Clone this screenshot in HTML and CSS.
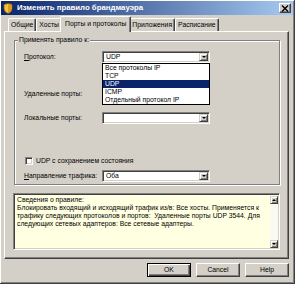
FILE: index.html
```html
<!DOCTYPE html>
<html lang="ru">
<head>
<meta charset="utf-8">
<title>Изменить правило брандмауэра</title>
<link rel="stylesheet" href="styles.css">
</head>
<body>
<div class="window">
  <div class="titlebar">
    <svg class="title-icon" width="10" height="11" viewBox="0 0 10 11">
      <path d="M1 1.5 L5 0.5 L9 1.5 L9 5.5 Q9 9 5 10.5 Q1 9 1 5.5 Z" fill="#f2c53d" stroke="#8a5a10" stroke-width="0.8"/>
      <path d="M5 1.2 L5 10 Q8.3 8.6 8.3 5.5 L8.3 2 Z" fill="#e09a1c"/>
    </svg>
    <span class="title-text">Изменить правило брандмауэра</span>
    <div class="close">
      <svg width="8" height="7" viewBox="0 0 8 7"><path d="M1 0.5 L7 6.5 M7 0.5 L1 6.5" stroke="#000" stroke-width="1.4"/></svg>
    </div>
  </div>

  <div class="tabs">
    <div class="tab">Общие</div>
    <div class="tab">Хосты</div>
    <div class="tab tab-active">Порты и протоколы</div>
    <div class="tab">Приложения</div>
    <div class="tab">Расписание</div>
  </div>

  <div class="panel">
    <div class="group">
      <div class="legend">Применять правило к:</div>

      <div class="row r-proto">
        <label class="lbl"><u>П</u>ротокол:</label>
        <div class="combo">
          <span class="combo-text">UDP</span>
          <span class="arrow-btn"><span class="tri-down"></span></span>
          <div class="dropdown">
            <div class="item">Все протоколы IP</div>
            <div class="item">TCP</div>
            <div class="item item-sel">UDP</div>
            <div class="item">ICMP</div>
            <div class="item">Отдельный протокол IP</div>
          </div>
        </div>
      </div>

      <div class="row r-remote">
        <label class="lbl">Удаленные порты:</label>
        <div class="field"></div>
      </div>

      <div class="row r-local">
        <label class="lbl">Локальные порты:</label>
        <div class="combo">
          <span class="combo-text"></span>
          <span class="arrow-btn"><span class="tri-down"></span></span>
        </div>
      </div>

      <div class="row r-check">
        <span class="checkbox"></span>
        <span class="check-label">UDP с сохранением состояния</span>
      </div>

      <div class="row r-dir">
        <label class="lbl"><u>Н</u>аправление трафика:</label>
        <div class="combo">
          <span class="combo-text">Оба</span>
          <span class="arrow-btn"><span class="tri-down"></span></span>
        </div>
      </div>
    </div>

    <div class="info">
      <div class="info-text">Сведения о правиле:<br>Блокировать входящий и исходящий трафик из/в: Все хосты. Применяется к<br>трафику следующих протоколов и портов:&nbsp; Удаленные порты UDP 3544. Для<br>следующих сетевых адаптеров: Все сетевые адаптеры.</div>
      <div class="scrollbar">
        <span class="sb-btn"><span class="tri-up"></span></span>
        <span class="sb-track"></span>
        <span class="sb-btn"><span class="tri-down"></span></span>
      </div>
    </div>
  </div>

  <div class="buttons">
    <div class="btn btn-default">OK</div>
    <div class="btn">Cancel</div>
    <div class="btn">Help</div>
  </div>
</div>
</body>
</html>
```

FILE: styles.css
```css
* { box-sizing: border-box; }

body {
  margin: 0;
  background: #d4d0c8;
  font-family: "Liberation Sans", Arial, sans-serif;
  font-size: 6.8px;
  line-height: 8px;
  color: #000;
}

.window {
  width: 295px;
  height: 284px;
  padding: 1px 3px 0 2px;
  background: #d4d0c8;
  border-right: 1px solid #404040;
  border-bottom: 1px solid #404040;
  box-shadow: inset 1px 1px #ffffff, inset -1px -1px #808080;
}

.titlebar {
  height: 14px;
  margin: 0 -2px 0 -1px;
  padding: 0 2px 0 2px;
  display: flex;
  align-items: center;
  background: linear-gradient(to right, #0a246a, #a6caf0);
  color: #fff;
  font-weight: bold;
  font-size: 7.8px;
}

.title-icon { margin-right: 4px; flex: none; }
.title-text { flex: 1; white-space: nowrap; }

.close {
  width: 12px;
  height: 10px;
  display: flex;
  align-items: center;
  justify-content: center;
  background: #d4d0c8;
  border: 1px solid;
  border-color: #fff #404040 #404040 #fff;
  box-shadow: inset -1px -1px #808080;
}

.tabs {
  height: 16px;
  display: flex;
  align-items: flex-end;
  padding-left: 6px;
}

.tab {
  height: 13px;
  padding: 0 2px;
  border: 1px solid;
  border-color: #fff #404040 transparent #fff;
  border-bottom: none;
  border-radius: 2px 2px 0 0;
  line-height: 11px;
  white-space: nowrap;
  box-shadow: inset -1px 0 #808080;
}

.tab-active {
  height: 16px;
  margin: 0 -2px -1px -2px;
  padding: 0 4px;
  position: relative;
  z-index: 2;
  background: #d4d0c8;
  line-height: 13px;
}

.panel {
  height: 228px;
  margin: 0 2px;
  padding: 8px 8px 0 9px;
  border: 1px solid;
  border-color: #fff #404040 #404040 #fff;
  box-shadow: inset -1px -1px #808080;
}

.group {
  position: relative;
  height: 145px;
  padding: 10px 0 0 9px;
  border: 1px solid #808080;
  box-shadow: 1px 1px 0 #fff, inset 1px 1px 0 #fff;
}

.legend {
  position: absolute;
  top: -5px;
  left: 3px;
  padding: 0 1px;
  background: #d4d0c8;
  white-space: nowrap;
}

.row {
  display: flex;
  align-items: center;
  height: 12px;
}

.r-remote { margin-top: 25px; }
.r-local { margin-top: 12px; }
.r-check { margin-top: 32px; height: 9px; padding-left: 1px; }
.r-dir { margin-top: 5px; }

.lbl {
  width: 78px;
  flex: none;
  white-space: nowrap;
}

.combo, .field {
  position: relative;
  width: 108px;
  height: 12px;
  display: flex;
  align-items: center;
  padding: 1px;
  background: #fff;
  border: 1px solid;
  border-color: #808080 #fff #fff #808080;
  box-shadow: inset 1px 1px #404040, inset -1px -1px #d4d0c8;
}

.combo-text {
  flex: 1;
  padding-left: 2px;
  white-space: nowrap;
}

.arrow-btn, .sb-btn {
  width: 9px;
  height: 8px;
  flex: none;
  display: flex;
  align-items: center;
  justify-content: center;
  background: #d4d0c8;
  border: 1px solid;
  border-color: #d4d0c8 #404040 #404040 #d4d0c8;
  box-shadow: inset 1px 1px #fff, inset -1px -1px #808080;
}

.tri-down {
  width: 0;
  height: 0;
  border-left: 2px solid transparent;
  border-right: 2px solid transparent;
  border-top: 2px solid #000;
}

.tri-up {
  width: 0;
  height: 0;
  border-left: 2px solid transparent;
  border-right: 2px solid transparent;
  border-bottom: 2px solid #000;
}

.dropdown {
  position: absolute;
  top: 11px;
  left: -1px;
  width: 108px;
  z-index: 5;
  background: #fff;
  border: 1px solid #000;
}

.item {
  height: 8px;
  padding-left: 2px;
  white-space: nowrap;
}

.item-sel {
  background: #0a246a;
  color: #fff;
}

.checkbox {
  width: 8px;
  height: 8px;
  flex: none;
  background: #fff;
  border: 1px solid;
  border-color: #808080 #fff #fff #808080;
  box-shadow: inset 1px 1px #404040, inset -1px -1px #d4d0c8;
}

.check-label {
  margin-left: 3px;
  white-space: nowrap;
}

.info {
  display: flex;
  width: 267px;
  height: 57px;
  margin: 8px 0 0 -1px;
  background: #ffffe1;
  border: 1px solid;
  border-color: #808080 #fff #fff #808080;
  box-shadow: inset 1px 1px #404040, inset -1px -1px #d4d0c8;
  padding: 2px 1px 1px 3px;
}

.info-text {
  flex: 1;
  white-space: nowrap;
  overflow: hidden;
}

.scrollbar {
  width: 8px;
  display: flex;
  flex-direction: column;
}

.scrollbar .sb-btn { width: 8px; }

.sb-track {
  flex: 1;
  background: #fbfaf0;
}

.buttons {
  display: flex;
  justify-content: flex-end;
  gap: 5px;
  margin-top: 4px;
  padding-right: 2px;
}

.btn {
  width: 44px;
  height: 14px;
  display: flex;
  align-items: center;
  justify-content: center;
  background: #d4d0c8;
  border: 1px solid;
  border-color: #fff #404040 #404040 #fff;
  box-shadow: inset -1px -1px #808080;
}

.btn-default {
  border-color: #000;
  box-shadow: inset 1px 1px #fff, inset -1px -1px #404040, inset -2px -2px #808080;
}
```
